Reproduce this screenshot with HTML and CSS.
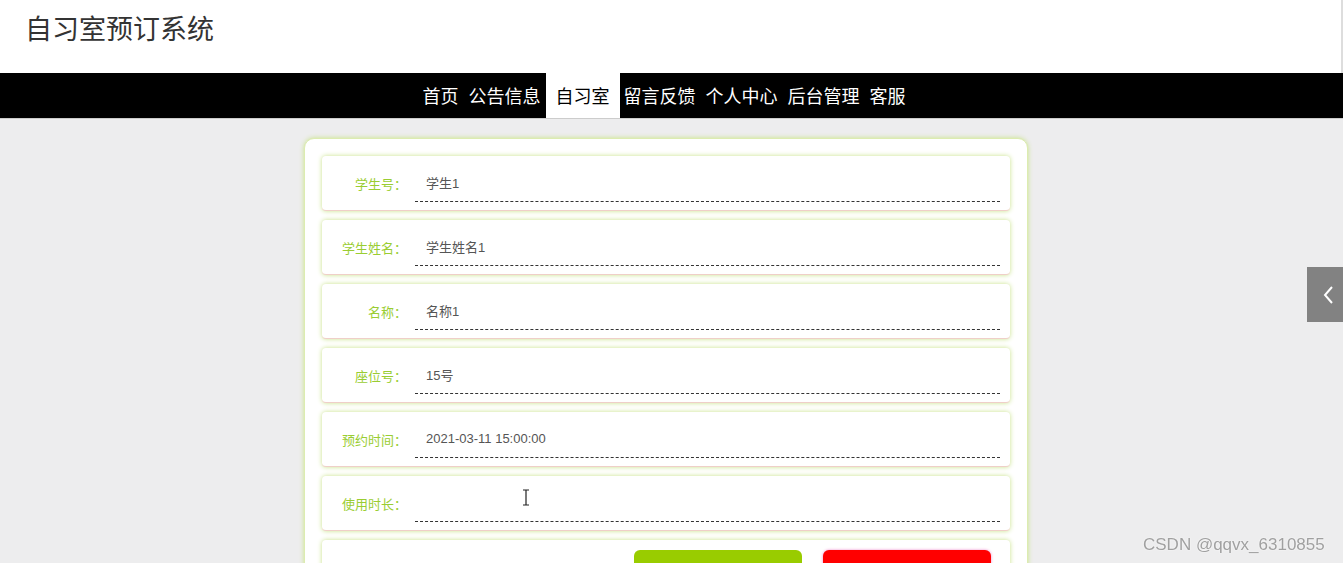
FILE: index.html
```html
<!DOCTYPE html>
<html lang="zh-CN">
  <head>
    <meta charset="UTF-8" />
    <title>自习室预订系统</title>
    <link rel="stylesheet" href="styles.css">
  </head>
  <body>
    <header class="top">
      <div class="site-title">自习室预订系统</div>
    </header>

    <nav class="menu">
      <a href="#">首页</a>
      <a href="#">公告信息</a>
      <a href="#" class="active">自习室</a>
      <a href="#">留言反馈</a>
      <a href="#">个人中心</a>
      <a href="#">后台管理</a>
      <a href="#">客服</a>
    </nav>

    <main class="main">
      <form class="form-box">
        <div class="form-row">
          <label>学生号：</label>
          <input type="text" value="学生1" />
        </div>
        <div class="form-row">
          <label>学生姓名：</label>
          <input type="text" value="学生姓名1" />
        </div>
        <div class="form-row">
          <label>名称：</label>
          <input type="text" value="名称1" />
        </div>
        <div class="form-row">
          <label>座位号：</label>
          <input type="text" value="15号" />
        </div>
        <div class="form-row">
          <label>预约时间：</label>
          <input type="text" value="2021-03-11 15:00:00" />
        </div>
        <div class="form-row">
          <label>使用时长：</label>
          <input type="text" value="" />
        </div>
        <div class="form-row btn-row">
          <button type="button" class="btn btn-ok">提交</button>
          <button type="button" class="btn btn-cancel">取消</button>
        </div>
      </form>
    </main>

    <!-- 右侧收起按钮 -->
    <div class="side-tab">
      <svg width="12" height="20" viewBox="0 0 12 20">
        <path d="M10 2 L3 10 L10 18" fill="none" stroke="#fff" stroke-width="2" />
      </svg>
    </div>

    <svg class="cursor" width="10" height="17" viewBox="0 0 10 17">
      <path d="M2 1 H8 M5 1 V16 M2 16 H8" fill="none" stroke="#222" stroke-width="1.2" />
    </svg>

    <div class="watermark">CSDN @qqvx_6310855</div>
  </body>
</html>
```

FILE: styles.css
```css
body {
  margin: 0;
  background: #ededee;
  font-family: "Liberation Sans", "Noto Sans CJK SC", sans-serif;
  font-size: 13px;
}
.top {
  background: #fff;
  height: 73px;
  border-right: 2px solid #ddd;
}
.site-title {
  padding: 9px 25px 0;
  font-family: "Noto Sans CJK SC", sans-serif;
  font-size: 27px;
  line-height: 38px;
  color: #333;
}
.menu {
  display: flex;
  justify-content: center;
  align-items: stretch;
  height: 45px;
  background: #000;
  padding-right: 15px;
  border-bottom: 1px solid #ccc;
}
.menu a {
  display: flex;
  align-items: center;
  padding: 0 5px 2px;
  color: #fff;
  text-decoration: none;
  font-family: "Noto Sans CJK SC", sans-serif;
  font-size: 18px;
}
.menu a.active {
  background: #fff;
  color: #000;
  padding: 0 10px 2px;
  margin: 0 -1px 0 0;
}
.main {
  display: flex;
  justify-content: center;
  padding: 19px 11px 0 0;
}
.form-box {
  width: 688px;
  padding: 17px 17px 0;
  background: #fff;
  border: 1px solid #dcecb0;
  border-radius: 10px;
  box-shadow: 0 0 5px #c8e288;
  display: flex;
  flex-direction: column;
  gap: 9px;
}
.form-row {
  display: flex;
  align-items: center;
  height: 54px;
  padding: 0 10px 0 0;
  background: #fff;
  border-radius: 4px;
  border-bottom: 1px solid #efcfc8;
  box-shadow: 0 0 5px #c8e288;
}
.form-row label {
  width: 85px;
  text-align: right;
  color: #9acd32;
  font-size: 13px;
  flex-shrink: 0;
}
.form-row input {
  flex: 1;
  margin: 0 0 0 8px;
  height: 38px;
  padding: 0 11px;
  box-sizing: border-box;
  border: 0;
  border-bottom: 1px dashed #333;
  outline: none;
  background: transparent;
  font-family: "Liberation Sans", "Noto Sans CJK SC", sans-serif;
  font-size: 13px;
  color: #555;
}
.btn-row {
  align-items: flex-start;
  justify-content: flex-end;
  gap: 21px;
  padding: 10px 19px 0 0;
  height: 60px;
}
.btn {
  width: 168px;
  height: 44px;
  border: 0;
  border-radius: 6px;
  font-family: "Noto Sans CJK SC", sans-serif;
  font-size: 16px;
  color: #666;
  padding-top: 14px;
}
.btn-ok {
  background: #99cc00;
}
.btn-cancel {
  background: #ff0000;
  box-shadow: 0 0 3px #e8c;
}
.side-tab {
  position: fixed;
  right: 0;
  top: 267px;
  width: 36px;
  height: 55px;
  background: #828282;
  display: flex;
  align-items: center;
  justify-content: center;
  padding-left: 6px;
  box-sizing: border-box;
}
.cursor {
  position: absolute;
  left: 521px;
  top: 489px;
}
.watermark {
  position: fixed;
  left: 1143px;
  top: 535px;
  font-family: "Liberation Sans", sans-serif;
  font-size: 17px;
  color: #a0a0a0;
  text-shadow: 0 0 2px #fff;
}
```
